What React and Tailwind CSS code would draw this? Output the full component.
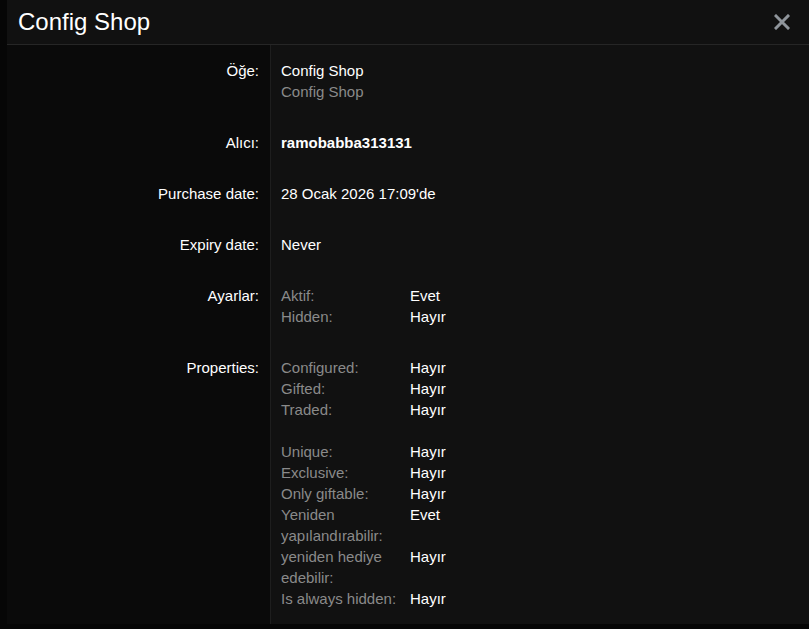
import React from 'react';

const settings = [
  { label: 'Aktif:', value: 'Evet' },
  { label: 'Hidden:', value: 'Hayır' },
];

const propertyGroups = [
  [
    { label: 'Configured:', value: 'Hayır' },
    { label: 'Gifted:', value: 'Hayır' },
    { label: 'Traded:', value: 'Hayır' },
  ],
  [
    { label: 'Unique:', value: 'Hayır' },
    { label: 'Exclusive:', value: 'Hayır' },
    { label: 'Only giftable:', value: 'Hayır' },
    { label: 'Yeniden yapılandırabilir:', value: 'Evet' },
    { label: 'yeniden hediye edebilir:', value: 'Hayır' },
    { label: 'Is always hidden:', value: 'Hayır' },
  ],
];

function PairList({ items }) {
  return (
    <div>
      {items.map((item) => (
        <div key={item.label} className="flex">
          <div className="w-[129px] shrink-0 pr-[6px] text-[#8a8a8a]">{item.label}</div>
          <div className="text-white">{item.value}</div>
        </div>
      ))}
    </div>
  );
}

function Row({ label, children }) {
  return (
    <div className="flex">
      <div className="w-[263px] shrink-0 bg-[#0a0a0a] py-[15px] pr-[11px] text-right text-white">
        {label}
      </div>
      <div className="flex-1 border-l border-[#1e1e1e] bg-[#111111] py-[15px] pl-[10px]">
        {children}
      </div>
    </div>
  );
}

export default function App() {
  return (
    <div
      className="flex h-[629px] w-[809px] overflow-hidden bg-[#060606] text-[15px] leading-[21px]"
      style={{ fontFamily: '"Liberation Sans", Arial, sans-serif' }}
    >
      <div className="ml-[7px] flex h-[624px] flex-1 flex-col">
        {/* header */}
        <div className="flex h-[45px] shrink-0 items-center justify-between border-b border-[#262626] bg-[#111111] pl-[11px] pr-[19px]">
          <h2 className="text-[24px] leading-[28px] text-white">Config Shop</h2>
          <button className="text-[#8f959b]" aria-label="Close">
            <svg width="16" height="16" viewBox="0 0 16 16">
              <path d="M2 2 L14 14 M14 2 L2 14" stroke="currentColor" strokeWidth="3" strokeLinecap="square" />
            </svg>
          </button>
        </div>

        {/* body */}
        <div className="flex flex-1 flex-col bg-[#111111]">
          <Row label="Öğe:">
            <div className="text-white">Config Shop</div>
            <div className="text-[#8a8a8a]">Config Shop</div>
          </Row>
          <Row label="Alıcı:">
            <div className="font-bold text-white">ramobabba313131</div>
          </Row>
          <Row label="Purchase date:">
            <div className="text-white">28 Ocak 2026 17:09'de</div>
          </Row>
          <Row label="Expiry date:">
            <div className="text-white">Never</div>
          </Row>
          <Row label="Ayarlar:">
            <PairList items={settings} />
          </Row>
          <Row label="Properties:">
            <div className="flex flex-col gap-[21px]">
              {propertyGroups.map((group, i) => (
                <PairList key={i} items={group} />
              ))}
            </div>
          </Row>
          <div className="flex flex-1">
            <div className="w-[263px] shrink-0 bg-[#0a0a0a]" />
            <div className="flex-1 border-l border-[#1e1e1e]" />
          </div>
        </div>
      </div>
    </div>
  );
}
